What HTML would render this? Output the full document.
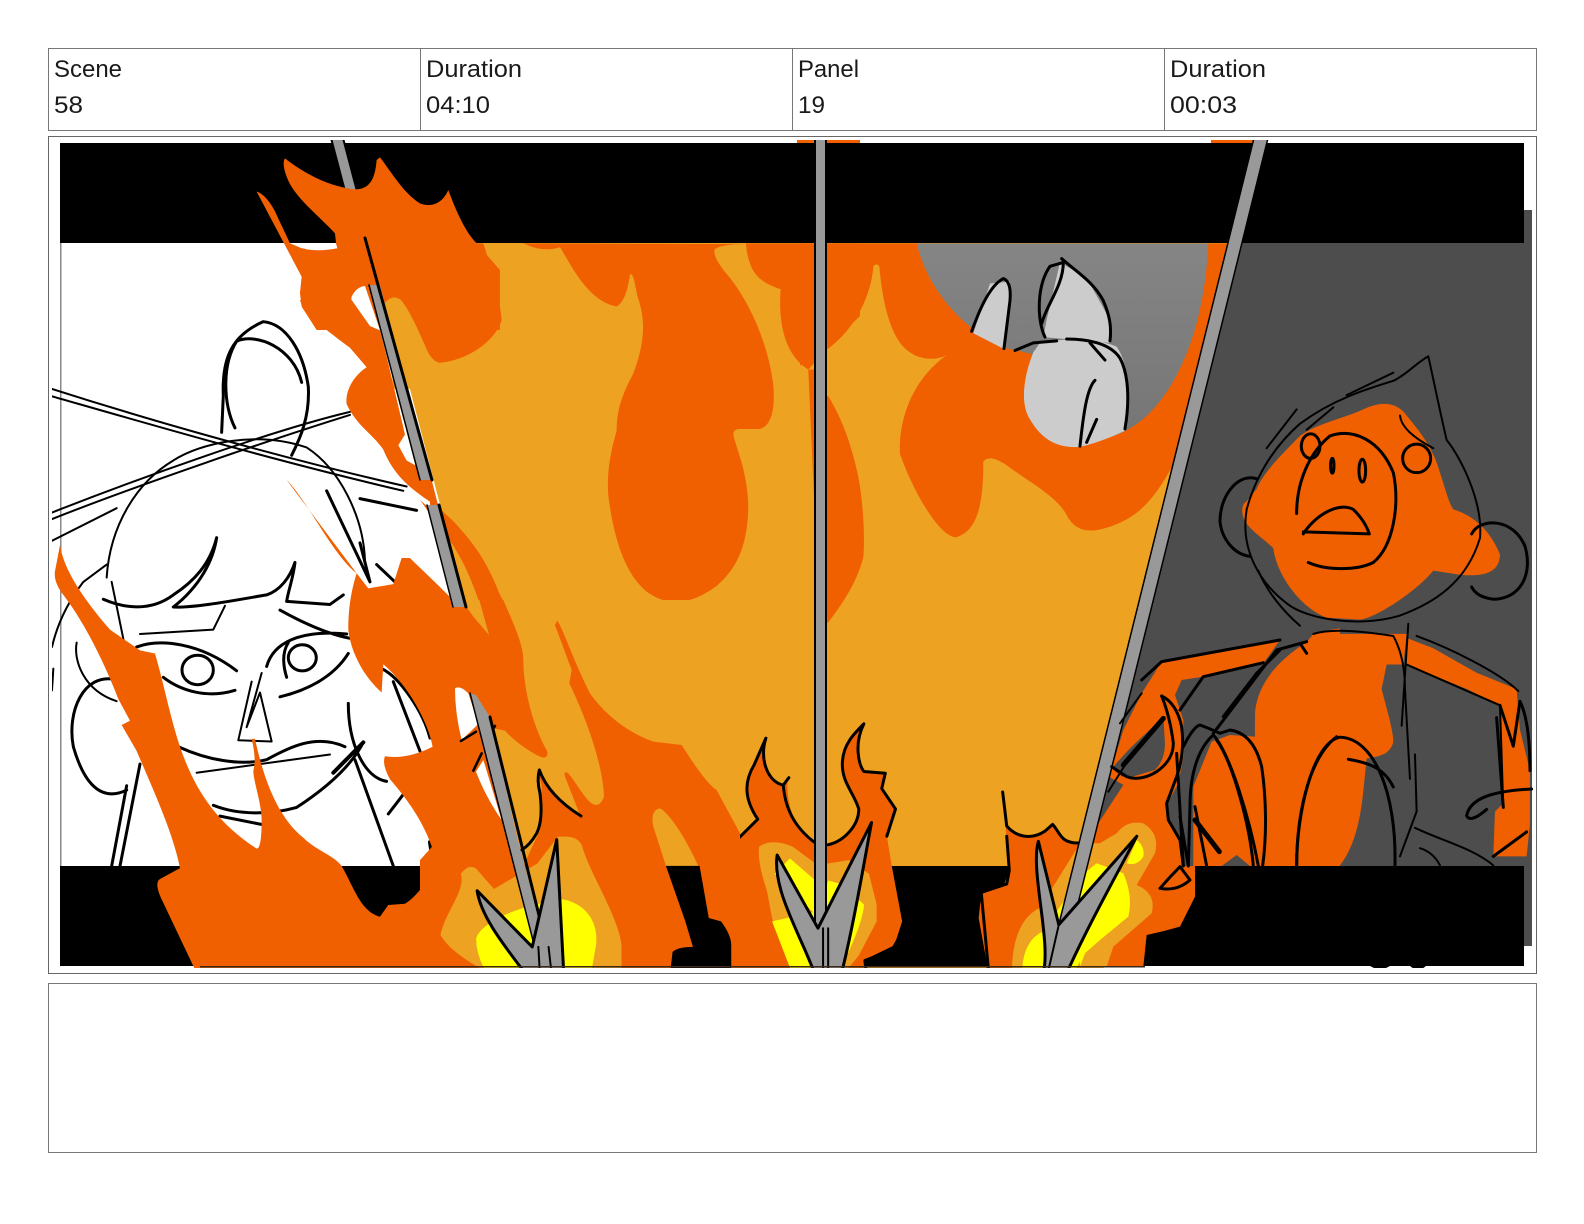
<!DOCTYPE html>
<html><head><meta charset="utf-8"><title>Storyboard</title>
<style>
html,body{margin:0;padding:0;background:#fff;width:1584px;height:1224px;overflow:hidden}
svg{display:block}
.l{fill:none;stroke:#000;stroke-width:2;vector-effect:non-scaling-stroke;stroke-linecap:round;stroke-linejoin:round}
.t{stroke-width:3}
.o{fill:#f06000}.a{fill:#eea222}.y{fill:#ffff00}.k{fill:#000}.w{fill:#fff}.d{fill:#4d4d4d}
.s{fill:#999}
.g{fill:#999;stroke:#000;stroke-width:2;vector-effect:non-scaling-stroke;stroke-linejoin:round}
text{font-family:"Liberation Sans",sans-serif;font-size:24px;fill:#1a1a1a}
</style></head><body>
<svg width="1584" height="1224" viewBox="0 0 1584 1224" xmlns="http://www.w3.org/2000/svg">
<defs>
<clipPath id="c"><rect x="52" y="140" width="1481" height="828"/></clipPath>
<linearGradient id="gr" x1="0" y1="0" x2="0" y2="1"><stop offset="0" stop-color="#858585"/><stop offset="1" stop-color="#757575"/></linearGradient>
</defs>
<rect width="1584" height="1224" fill="#fff"/>
<rect x="48.500" y="48.500" width="1488" height="82" fill="#fff" stroke="#777"/>
<path d="M420.500 48V130M792.500 48V130M1164.500 48V130" stroke="#777" fill="none"/>
<text x="54" y="77" textLength="68" lengthAdjust="spacingAndGlyphs">Scene</text>
<text x="54" y="113" textLength="29" lengthAdjust="spacingAndGlyphs">58</text>
<text x="426" y="77" textLength="96" lengthAdjust="spacingAndGlyphs">Duration</text>
<text x="426" y="113" textLength="64" lengthAdjust="spacingAndGlyphs">04:10</text>
<text x="798" y="77" textLength="61" lengthAdjust="spacingAndGlyphs">Panel</text>
<text x="798" y="113" textLength="27" lengthAdjust="spacingAndGlyphs">19</text>
<text x="1170" y="77" textLength="96" lengthAdjust="spacingAndGlyphs">Duration</text>
<text x="1170" y="113" textLength="67" lengthAdjust="spacingAndGlyphs">00:03</text>
<rect x="48.500" y="136.500" width="1488" height="837" fill="#fff" stroke="#666"/>
<rect x="48.500" y="983.500" width="1488" height="169" fill="#fff" stroke="#777"/>

<g clip-path="url(#c)">
<rect x="60" y="243" width="1464" height="623" fill="#fff"/>
<rect x="60" y="243" width="1.500" height="623" fill="#888"/>
<polygon class="d" points="1230,210 1532,210 1532,946 1524,946 1524,866 1060,866"/>
<polygon class="a" points="372,243 1240,243 1062,968 548,968 470,620"/>

<!-- monkey fills -->
<g transform="translate(1100,240) scale(.3333,.4082)">
<path class="o" d="M440 640Q420 650 430 680C445 710 490 730 520 755C530 820 600 900 680 925L780 930C830 925 950 860 1000 810L1080 820Q1200 830 1200 770C1180 730 1140 680 1060 660C1045 640 1040 620 1020 570C1000 510 960 470 920 430C890 395 840 395 790 415C720 440 650 450 600 480C540 530 490 570 470 610Z"/>
<path class="o" d="M640 965L920 965L910 1040L860 1040L845 1100C860 1150 880 1200 880 1230C870 1260 840 1265 800 1270L790 1350C780 1430 760 1490 720 1532L480 1532L500 1350L465 1210C460 1150 500 1070 620 985Z"/>
<path class="o" d="M920 975L1000 1000L1130 1060L1250 1100L1260 1200L1290 1300L1290 1430L1280 1510L1180 1510L1185 1400L1210 1380L1200 1140L1100 1100L920 1040Z"/>
</g>

<!-- girl lines -->
<g transform="translate(40,300) scale(.3333,.4337)">
<path class="l t" d="M545 305L550 220C545 130 580 80 670 50C740 55 790 120 805 200C810 270 780 320 755 358"/>
<path class="l t" d="M585 295C550 240 545 150 590 95C650 75 760 110 785 190"/>
<path class="l" d="M36 205C300 270 700 360 1100 430M36 222C300 280 700 370 1090 440"/>
<path class="l" d="M36 490C300 410 700 300 930 258M36 505C300 425 700 320 930 265M36 555L230 480"/>
<path class="l" d="M200 640C210 520 290 420 400 370C480 330 650 300 800 340C900 390 970 500 975 600"/>
<path class="l t" d="M190 690C250 710 330 720 400 680C460 650 510 610 530 548C520 600 480 660 400 708C470 710 600 690 680 680C720 670 750 640 765 605C760 640 745 670 740 695L870 702L910 680"/>
<path class="l" d="M555 705L520 760L300 770"/>
<ellipse class="l t" cx="473" cy="853" rx="47" ry="34"/>
<ellipse class="l t" cx="787" cy="825" rx="42" ry="30"/>
<path class="l t" d="M290 800C360 780 480 790 590 855M370 870C420 900 500 920 585 900"/>
<path class="l t" d="M720 715C790 745 860 770 930 780M680 845C700 790 780 760 920 770M720 915C800 900 880 870 925 815M740 870Q720 820 745 790"/>
<path class="l" d="M635 880L595 1015L695 1018L660 905L620 985L665 860"/>
<path class="l t" d="M415 1030C500 1060 600 1075 680 1060C750 1030 830 1000 915 1030"/>
<path class="l" d="M470 1090L870 1048"/>
<path class="l t" d="M520 1165C600 1190 700 1185 770 1170C850 1130 930 1080 970 1020M540 1190L670 1210"/>
<path class="l" d="M110 790C100 830 130 900 230 925"/>
<path class="l t" d="M225 875C130 860 80 950 100 1030C130 1110 180 1160 260 1130"/>
<path class="l t" d="M215 1305L260 1120M240 1305L300 1070"/>
<path class="l t" d="M945 1060L1060 1305M925 930C925 1020 970 1100 1040 1110M1025 850C1080 870 1150 950 1170 1010M1060 880L1140 1040M860 440L990 650M960 458L1130 485M1010 610L1065 650M1045 1185L1090 1140M960 560L990 650"/>
<path class="l" style="stroke-width:4" d="M1170 1250L1180 1300M880 1090L970 1020"/>
<path class="l" d="M36 800Q60 720 130 650L200 610M215 650L255 800M36 900L40 850"/>
</g>

<!-- grey hole and rabbit -->
<g transform="translate(800,140) scale(.3333,.3827)">
<path class="o" d="M0 270L1290 270L1130 830C1090 900 1040 970 960 1000C880 1030 830 1030 800 980C770 930 680 890 620 850Q570 820 550 840C550 960 530 1020 470 1038C420 1040 340 920 300 820C295 740 330 630 440 562C400 580 340 575 300 530C260 480 245 400 238 330Q230 320 220 330C215 400 170 490 85 545L60 550L0 590Z"/>
<path fill="url(#gr)" d="M350 270C380 380 470 480 600 540L700 560L840 800L950 770C1080 730 1210 560 1225 270Z"/>
<path class="o" d="M60 660L85 670C120 720 150 780 175 880C190 950 195 1040 190 1090C170 1160 120 1220 85 1260L60 1270Z"/>
<path fill="#ccc" d="M700 555C670 620 660 690 690 730C730 790 780 805 840 802Q900 790 975 760C990 680 990 590 950 540C900 520 800 515 720 530Z"/>
<path fill="#ccc" d="M730 515L740 470L780 320L860 360L930 470L930 530Z"/>
<path fill="#ccc" d="M520 505L570 375L630 370L625 450L610 545Z"/>
<path class="l t" d="M515 500C540 440 570 380 610 362Q635 370 630 420L612 545"/>
<path class="l t" d="M735 515C710 470 710 380 750 330L790 320C790 380 740 430 725 480M785 310C830 345 880 370 910 420C930 460 935 490 930 525"/>
<path class="l t" d="M645 550L700 530L770 525M800 520C860 520 930 530 960 570C985 610 990 680 975 755"/>
<path class="l t" d="M840 800C850 720 860 650 885 628M860 790L890 730M870 530L915 575"/>
</g>

<g transform="translate(360,140) scale(.3333,.3827)">
<path class="o" d="M490 270Q550 295 600 280C630 320 680 420 770 435Q800 420 810 350C825 350 825 390 835 415C860 480 850 540 820 610C790 660 770 700 770 760C750 820 740 870 745 930C760 1030 790 1130 860 1180C930 1225 1000 1210 1070 1165C1130 1120 1165 1060 1165 950C1160 860 1130 810 1120 770Q1120 755 1140 755L1200 755C1240 745 1245 690 1240 640C1225 540 1180 440 1110 360C1085 335 1055 300 1065 285Q1085 272 1160 272Z"/>
<path class="o" d="M1158 270C1165 340 1190 370 1262 390C1255 470 1270 560 1345 600L1400 545L1500 460L1500 270Z"/>
<path class="o" d="M1345 600L1368 1050L1400 1050L1400 600Z"/>
</g>

<!-- bars -->
<rect class="k" x="60" y="143" width="1464" height="100"/>
<rect class="k" x="60" y="866" width="1464" height="100"/>
<rect class="o" x="797" y="140" width="63" height="3"/>
<rect class="o" x="1211" y="140" width="46" height="3"/>
<path class="k" d="M1370 966h20l-6 3h-8zM1410 966h16l-4 3h-8z"/>

<!-- spear top under flame -->
<polygon class="g" points="331,138 343,138 358,195 346,195"/>

<!-- flame A -->
<g transform="translate(0,30) scale(.3333)">
<path class="o" d="M770 485C790 490 815 520 830 555L870 640L905 655Q960 665 1010 655L1005 610C960 560 880 500 860 440Q845 400 855 385C900 420 970 465 1060 478C1100 480 1125 460 1130 390L1140 382C1170 420 1210 490 1260 520C1300 535 1330 515 1345 480C1360 520 1390 600 1430 640L1500 720L1500 900L950 900L905 830L900 790L905 740Z"/>
</g>
<g transform="translate(360,140) scale(.3333,.3827)">
<path class="o" d="M0 270L370 270C400 350 420 420 425 470C410 520 330 575 240 582C210 580 190 530 160 480C130 425 105 405 85 410L60 440L0 400Z"/>
<path class="a" d="M75 425Q100 400 125 420C160 460 190 530 215 575L250 650L100 650Z"/>
<path class="o" d="M180 940C240 990 330 1050 400 1160C450 1240 490 1300 490 1400C495 1480 520 1530 540 1568L300 1568L300 1300L385 1295C360 1200 320 1090 220 990Z"/>
</g>
<g transform="translate(0,30) scale(.3333)">
<path class="w" d="M1055 800Q1070 770 1095 768L1140 900L1100 895C1075 860 1050 830 1055 800Z"/>
<path class="w" d="M908 650Q960 662 1010 646L1012 655Q960 665 918 658Z"/>
</g>
<g transform="translate(40,300) scale(.3333,.4337)">
<path class="o" d="M780 0C790 30 860 70 930 110L980 155C940 175 915 210 920 240C950 290 1000 310 1030 345C1060 400 1100 430 1180 470L1200 490L1170 400L1100 370L1075 335L1095 310L1040 130L1020 70L990 60L935 0Z"/>
</g>

<!-- lower flames base -->
<g transform="translate(420,700) scale(.5102,.3406)">
<path class="o" d="M118 0L305 0C350 40 400 100 460 120L520 130L580 270L625 405Q650 360 662 345C635 290 635 240 655 190L675 110C665 170 680 240 712 250L720 240C720 310 730 370 775 420L800 425C830 415 860 370 860 320C850 270 825 240 828 180C830 130 850 100 870 70C850 130 860 190 870 210L912 215L905 260L932 320L915 400L925 490L945 650L930 720L875 760L870 805L210 805L170 400Z"/>
<path class="a" d="M665 430Q690 405 730 430L775 480L800 480L840 470L880 510L895 600L895 650L860 750L830 805L730 805L690 640L680 560Q660 470 665 430Z"/>
<path class="y" d="M695 510L725 465L775 530L775 630ZM690 650L780 620L800 530L825 540L870 600Q870 640 840 740L815 805L730 805Z"/>
<path class="o" d="M1142 270L1150 370C1170 405 1200 410 1225 385L1240 365C1255 390 1255 420 1290 420L1330 420L1330 805L1115 805L1095 640L1100 570L1145 540L1155 500Z"/>
<path class="a" d="M1160 805Q1160 650 1215 610L1290 430L1340 430L1340 805Z"/>
<path class="y" d="M1180 805Q1180 710 1220 680L1300 510L1340 490L1340 750L1300 750L1280 805Z"/>
<path class="l t" d="M625 405L662 350C635 290 635 240 655 190L678 112C665 170 680 240 712 250L723 228M712 250C715 310 730 370 775 420M800 425C830 415 860 370 860 320C850 270 825 240 828 180C830 130 850 100 870 70C850 130 860 190 870 210L912 215L905 260L932 320L915 400M875 805L872 765L925 735L942 690"/>
<path class="l t" d="M1142 270L1150 370C1170 405 1200 410 1225 385L1240 365C1255 390 1255 420 1290 420M1150 400L1155 500L1150 540L1100 565L1115 805"/>
</g>

<g transform="translate(40,300) scale(.3333,.4337)">
<path class="o" d="M60 565C70 620 130 690 210 760L300 808L345 815C370 880 390 960 420 1030C460 1120 520 1200 650 1265Q665 1265 665 1200C665 1160 640 1110 640 1085Q650 1060 635 1012L645 1012C670 1100 710 1190 790 1240C830 1270 880 1280 905 1305C940 1350 960 1410 1020 1422L1045 1395L1095 1392C1140 1370 1170 1330 1180 1300L1260 1568L480 1568L370 1390Q340 1345 360 1335L420 1310C400 1230 340 1130 290 1040L245 980L270 970L235 920C190 830 130 740 70 680Q40 650 45 625Z"/>
<path class="o" d="M740 415C800 460 880 590 950 630L985 665L1060 655L1085 595L1110 595C1170 640 1280 720 1345 775L1440 800L1440 1020C1390 990 1340 960 1290 910Q1260 890 1248 895C1240 950 1245 1010 1262 1030L1305 1090L1400 1240L1420 1310L1440 1400L1180 1400L1180 1270C1150 1200 1100 1150 1050 1105Q1025 1070 1035 1052Q1100 1060 1178 1030C1170 990 1120 900 1030 840L1025 905C960 860 930 800 925 760C925 720 930 680 950 630Z"/>
<path class="o" d="M1170 460L1240 510C1300 560 1340 600 1380 680L1440 760L1440 800L1345 775C1320 680 1260 570 1170 480Z"/>
</g>

<g transform="translate(420,700) scale(.5102,.3406)">
<path class="o" d="M30 420L200 300L230 805L0 805L0 470Z"/>
</g>

<!-- crop-1 detail: stream, tip, tongue -->
<g transform="translate(440,600) scale(.3333)">
<path class="a" d="M70 0L900 0L900 798L250 798Z"/>
<path class="o" d="M0 200L90 280L190 680L250 798L0 798Z"/>
<path class="o" d="M40 0L190 0C215 60 250 130 250 180C250 250 270 360 322 455Q325 480 300 470C260 450 220 420 195 392L160 385L100 290Z"/>
<path class="a" d="M65 0L118 0L147 105L100 50Z"/>
<path class="o" d="M352 62C375 100 395 170 450 280C500 350 570 400 640 425L725 435C760 490 800 550 830 570L900 700L900 798L775 798C740 720 690 640 660 625Q630 630 640 680L678 798L250 798L300 690L305 560L295 515L345 585L420 645L375 530Q370 510 385 520C410 550 430 590 455 610Q480 625 492 590C490 520 460 400 388 250L395 210L345 75Z"/>
<path class="w" d="M45 265Q60 255 85 280L115 372L65 420Q45 340 45 265Z"/>
<path class="w" d="M108 515L130 480L185 660C150 610 125 560 108 515Z"/>
<path class="l" style="stroke-width:2.500" d="M63 423L108 395M100 512L125 460M135 340L140 370M165 378L150 400"/>
<path class="l t" d="M298 510Q290 540 300 580Q310 660 290 700Q270 735 245 750M298 510C320 570 370 615 423 648"/>
</g>

<!-- repaint bottom left patches -->
<g transform="translate(420,700) scale(.5102,.3406)">
<path class="a" d="M40 690C50 620 90 560 80 510Q95 480 110 495L145 555L230 480L270 402Q310 395 318 430C330 500 390 640 395 720L395 805L130 800C100 770 60 740 40 690Z"/>
<path class="y" d="M110 700C120 650 200 600 280 585C330 600 350 660 345 720L335 805L130 800Q110 750 110 700Z"/>
<path class="k" d="M482 487L548 487L566 640L590 650Q610 690 610 720L610 805L490 805L495 740Q505 725 535 725L520 650Z"/>
<rect x="490" y="800" width="120" height="8" fill="#ddd"/>
</g>

<!-- crop-2 detail: arm, hand, leg fills -->
<g transform="translate(1080,620) scale(.3333)">
<path class="o" d="M100 430L130 330L185 220L245 125L600 60L550 130L370 170L305 180L285 225L310 300L312 400L295 490L262 550L265 600L298 660L305 738L345 738L345 830L300 920Q250 935 200 945L190 1040L0 1040L0 770L30 670L45 625L130 495L85 470Z"/>
<path class="d" d="M250 290L255 370Q255 420 225 450L150 472L95 445L150 385Z"/>
<path class="d" d="M85 470L130 495L60 590L45 625L60 540Z"/>
<path class="o" d="M340 500L395 365L450 345L525 350L525 280C530 220 560 140 690 60L720 35L780 25L780 738L340 738Z"/>
<path class="d" d="M425 738L470 705L510 738Z"/>
<path class="a" d="M110 640Q140 600 190 610Q240 640 225 700L170 795Q230 820 215 880L100 980L80 1040L0 1040L0 670L60 670Z"/>
<path class="y" d="M0 770L50 730L130 760Q160 830 145 890L60 960L15 1000L0 1040Z"/>
<path class="y" d="M170 660Q195 680 190 710Q170 740 140 730Z"/>
</g>

<!-- spears -->
<polygon class="s" points="369,285 380,285 432,480 420,480"/>
<polygon class="s" points="427,505 439,505 466,607 453,607"/>
<polygon class="s" points="470,693 476,695 490,717 516,833 552,968 540,968 505,833"/>
<path class="l t" d="M365 238L432 480M439 505L466 607M490 717L552 968"/>
<path class="l" style="stroke-width:1.500" d="M369 285L420 480M427 505L453 607M470 693L540 968"/>
<polygon class="s" points="815,138 826,138 826,968 815,968"/>
<path class="l" d="M815 138V968M826 138V968"/>
<polygon class="s" points="1254,138 1268,138 1062,968 1048,968"/>
<path class="l" style="stroke-width:1.500" d="M1254 138L1048 968M1268 138L1062 968"/>

<!-- arrowheads -->
<g transform="translate(420,700) scale(.5102,.3406)">
<path class="g" style="stroke-width:3" d="M112 560L220 725L268 410L282 810L210 810C170 730 120 640 112 560Z"/>
<path class="g" style="stroke-width:3" d="M700 455L780 670L885 360C870 480 850 660 825 810L775 810C750 700 690 560 700 455Z"/>
<path class="g" style="stroke-width:3" d="M1212 415L1252 660L1405 400C1370 500 1310 660 1265 810L1220 810C1240 720 1195 500 1212 415Z"/>
<path class="l" d="M232 725L235 805M252 725L258 805M790 670V805M800 670V805M1252 660L1230 805"/>
</g>

<!-- monkey lines on top -->
<g transform="translate(1100,240) scale(.3333,.4082)">
<path class="l" d="M985 285C950 300 920 330 880 345C800 365 700 390 600 450C530 500 470 570 440 660C420 760 480 840 560 890C620 930 780 950 900 920C1000 890 1100 840 1140 730C1150 640 1080 530 1040 490C1020 420 1000 340 985 285"/>
<path class="l" d="M500 510L590 415M620 465L700 410M740 380L880 325M475 810C500 860 550 910 600 945"/>
<path class="l t" d="M470 585C420 570 360 620 360 690C365 730 400 770 450 775"/>
<path class="l t" d="M1115 720C1140 680 1240 680 1275 750C1300 820 1260 880 1180 880Q1130 875 1115 850"/>
<path class="l t" d="M590 670C590 590 630 520 690 480C760 460 840 490 880 570C900 650 880 750 820 790C770 810 680 810 625 790"/>
<path class="l t" d="M610 720C640 680 710 640 760 660C785 680 800 700 808 720L610 715"/>
<ellipse class="l t" cx="697" cy="553" rx="5" ry="18"/>
<ellipse class="l t" cx="787" cy="565" rx="10" ry="28"/>
<ellipse class="l t" cx="632" cy="505" rx="28" ry="30"/>
<ellipse class="l t" cx="950" cy="535" rx="42" ry="35"/>
<path class="l" d="M900 430Q905 470 1000 510"/>
<path class="l" d="M640 965C700 950 800 960 880 970C900 1000 915 1040 915 1100L930 1320M925 940L905 1190"/>
<path class="l" d="M950 970C1050 1000 1200 1060 1255 1105M920 1040L1200 1140L1210 1390"/>
<path class="l t" d="M590 1532C590 1400 640 1230 720 1218C820 1220 890 1350 885 1532M745 1272C800 1280 850 1290 880 1340"/>
<path class="l" d="M945 1260L950 1400L900 1510M945 1440C1020 1470 1120 1490 1180 1532M960 1490Q1000 1500 1020 1532"/>
<path class="l t" d="M1100 1410C1110 1370 1170 1350 1295 1345M1100 1410Q1110 1430 1160 1395M1190 1170L1210 1390M1200 1140L1240 1240L1260 1130Q1290 1180 1290 1300M1180 1510L1280 1450"/>
</g>
<g transform="translate(1080,620) scale(.3333)">
<path class="l t" d="M245 228Q290 250 305 320Q315 400 290 470L260 550L265 600L300 660L310 738"/>
<path class="l t" d="M245 228Q270 290 280 370Q280 420 230 455Q180 485 140 470L95 440L130 465"/>
<path class="l" style="stroke-width:5" d="M130 435L250 295"/>
<path class="l" d="M85 515L135 435M120 310L185 220"/>
<path class="l t" d="M185 180L245 125L600 60M370 170L550 128M300 270L370 170M430 290L530 160L600 90M400 340L590 90L680 65M680 100L660 70"/>
<path class="l t" d="M310 380Q340 320 360 315Q400 330 420 340L450 330Q520 340 545 440C560 540 560 650 548 738"/>
<path class="l t" d="M325 738L330 560C330 450 360 380 400 345C450 400 510 600 535 738M410 360C460 430 510 620 520 738"/>
<path class="l t" d="M290 400L310 738M300 590L325 738M345 560L380 738"/>
<path class="l" style="stroke-width:5" d="M345 600L418 695"/>
<path class="l t" d="M240 805Q270 770 300 740L330 780Q290 815 240 805"/>
<path class="l t" d="M650 738C650 600 680 420 770 350"/>
</g>
<rect x="200" y="966" width="945" height="1.500" fill="#3a2a1a"/>
</g>
</svg>
</body></html>
